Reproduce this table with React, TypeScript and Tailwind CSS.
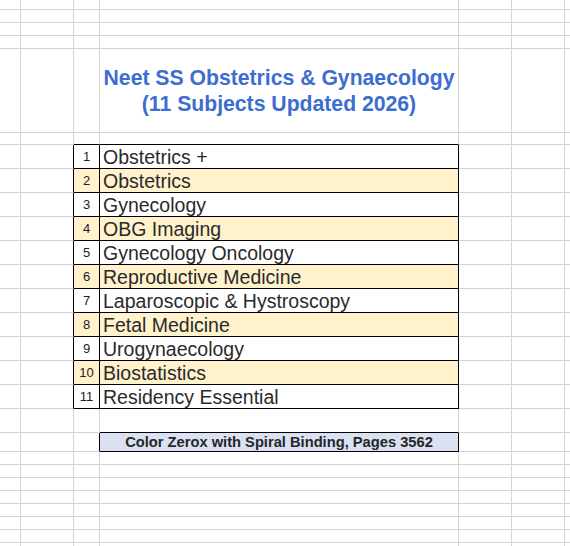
import type { ReactNode } from "react";

const subjects = [
  "Obstetrics +",
  "Obstetrics",
  "Gynecology",
  "OBG Imaging",
  "Gynecology Oncology",
  "Reproductive Medicine",
  "Laparoscopic & Hystroscopy",
  "Fetal Medicine",
  "Urogynaecology",
  "Biostatistics",
  "Residency Essential",
];

const widths = [
  "w-[21px]",
  "w-[53px]",
  "w-[26px]",
  "w-[359px]",
  "w-[53px]",
  "w-[53px]",
  "flex-1",
];

type CellProps = {
  col: number;
  right?: boolean;
  bottom?: boolean;
  className?: string;
  children?: ReactNode;
};

function Cell({ col, right, bottom, className = "", children }: CellProps) {
  const r =
    col === 6
      ? "border-r-0"
      : right
        ? "border-r border-r-black"
        : "border-r border-r-[#d4d4d4]";
  const b = bottom ? "border-b border-b-black" : "border-b border-b-[#d4d4d4]";
  return (
    <div className={`${widths[col]} shrink-0 h-full ${r} ${b} ${className}`}>
      {children}
    </div>
  );
}

function Row({ h, children }: { h: string; children: ReactNode }) {
  return <div className={`flex w-full ${h}`}>{children}</div>;
}

function EmptyRow({ h }: { h: string }) {
  return (
    <Row h={h}>
      {widths.map((_, i) => (
        <Cell key={i} col={i} />
      ))}
    </Row>
  );
}

export default function App() {
  return (
    <div className="w-[570px] h-[546px] overflow-hidden bg-white font-['Liberation_Sans',Arial,sans-serif]">
      <EmptyRow h="h-[10px]" />
      <EmptyRow h="h-[13px]" />
      <EmptyRow h="h-[13px]" />
      <EmptyRow h="h-[13px]" />

      {/* titulo */}
      <Row h="h-[84px]">
        <Cell col={0} />
        <Cell col={1} />
        <Cell col={2} />
        <Cell
          col={3}
          className="flex flex-col items-center justify-center text-[21.2px] leading-[26px] font-bold text-[#3c6dd0] whitespace-nowrap"
        >
          <p>Neet SS Obstetrics &amp; Gynaecology</p>
          <p>(11 Subjects Updated 2026)</p>
        </Cell>
        <Cell col={4} />
        <Cell col={5} />
        <Cell col={6} />
      </Row>

      <Row h="h-[12px]">
        <Cell col={0} />
        <Cell col={1} />
        <Cell col={2} bottom />
        <Cell col={3} bottom />
        <Cell col={4} />
        <Cell col={5} />
        <Cell col={6} />
      </Row>

      {subjects.map((nome, i) => {
        const bg = i % 2 === 1 ? "bg-[#fff2cc]" : "bg-white";
        return (
          <Row key={nome} h="h-[24px]">
            <Cell col={0} />
            <Cell col={1} right />
            <Cell
              col={2}
              right
              bottom
              className={`${bg} flex items-center justify-center pt-[1px] text-[13px] text-[#222222]`}
            >
              {i + 1}
            </Cell>
            <Cell
              col={3}
              right
              bottom
              className={`${bg} flex items-center pl-[3px] pt-[2px] text-[19.5px] text-[#2a2a2a] whitespace-nowrap`}
            >
              {nome}
            </Cell>
            <Cell col={4} />
            <Cell col={5} />
            <Cell col={6} />
          </Row>
        );
      })}

      <Row h="h-[24px]">
        <Cell col={0} />
        <Cell col={1} />
        <Cell col={2} />
        <Cell col={3} bottom />
        <Cell col={4} />
        <Cell col={5} />
        <Cell col={6} />
      </Row>

      <Row h="h-[19px]">
        <Cell col={0} />
        <Cell col={1} />
        <Cell col={2} right />
        <Cell
          col={3}
          right
          bottom
          className="bg-[#d9e1f2] flex items-center justify-center text-[14.7px] font-bold text-[#262626] whitespace-nowrap"
        >
          Color Zerox with Spiral Binding, Pages 3562
        </Cell>
        <Cell col={4} />
        <Cell col={5} />
        <Cell col={6} />
      </Row>

      <EmptyRow h="h-[13px]" />
      <EmptyRow h="h-[13px]" />
      <EmptyRow h="h-[13px]" />
      <EmptyRow h="h-[13px]" />
      <EmptyRow h="h-[13px]" />
      <EmptyRow h="h-[13px]" />
      <EmptyRow h="h-[13px]" />
      <EmptyRow h="h-[13px]" />
    </div>
  );
}
